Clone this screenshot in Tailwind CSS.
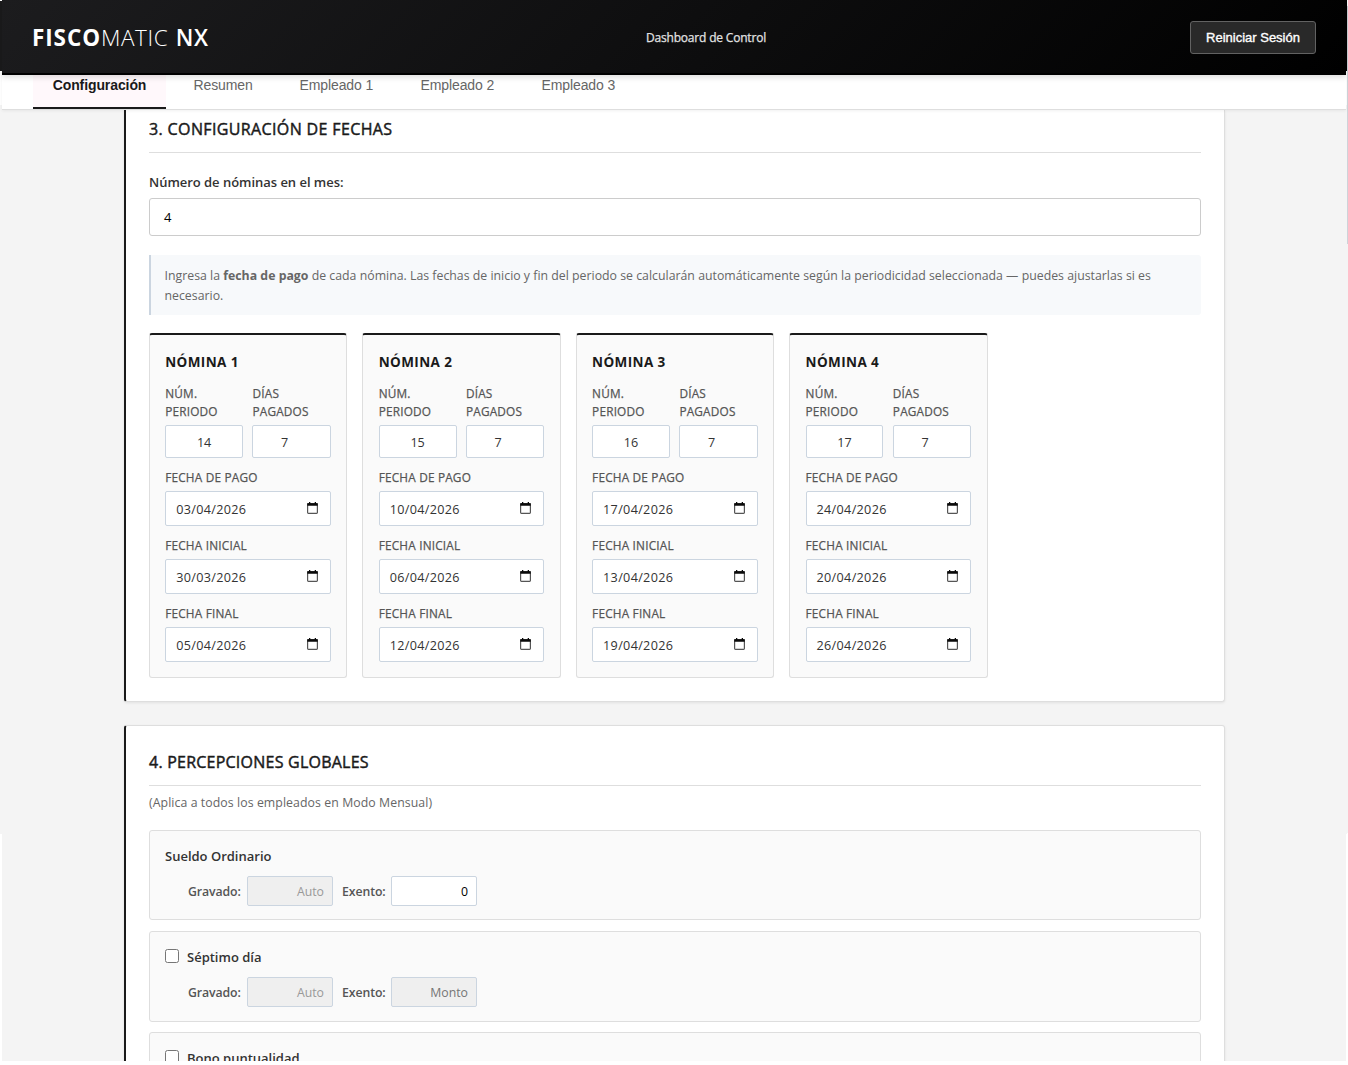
<!DOCTYPE html>
<html lang="es">
<head>
<meta charset="utf-8">
<title>Fiscomatic NX</title>
<script src="https://cdn.jsdelivr.net/npm/@tailwindcss/browser@4"></script>
</head>
<body class="h-[1065px] overflow-hidden bg-white font-['Open_Sans','Noto_Sans',sans-serif]">
<div class="flex h-[1061px] overflow-hidden">
  <div class="flex w-[2px] shrink-0 flex-col">
    <div class="h-[70px] mt-px bg-[#1b1b1c]"></div>
    <div class="h-[34px] bg-white"></div>
    <div class="h-[729px] bg-[#f4f4f4]"></div>
  </div>

  <div class="flex h-[1061px] w-[1344px] shrink-0 flex-col bg-[#f4f4f4]">
    <header class="relative z-20 flex h-[75px] shrink-0 items-center justify-between border-b-2 border-black bg-[linear-gradient(135deg,#1c1c1e,#000)] pr-[30px] pl-[30px] text-white shadow-[0_2px_6px_rgba(0,0,0,0.15)]">
      <div class="flex items-center whitespace-pre pt-[2px] text-[22.5px] leading-[30px]"><span class="font-bold tracking-[0.9px]">FISCO</span><span class="font-light tracking-[0.6px]">MATIC </span><span class="ml-px font-semibold tracking-[0.6px]">NX</span></div>
      <div class="absolute left-[644px] top-[28px] whitespace-nowrap text-[12px] leading-[20px] tracking-[-0.19px] text-[#e2e2e2] [-webkit-text-stroke:0.25px_#e2e2e2]">Dashboard de Control</div>
      <button class="mt-[2px] flex h-[33px] w-[126px] items-center justify-center rounded-[3px] border border-[#626262] bg-[#292929] pt-px font-['Liberation_Sans',Arial,sans-serif] text-[13px] whitespace-nowrap text-white [-webkit-text-stroke:0.35px_white]">Reiniciar Sesión</button>
    </header>

    <nav class="relative z-10 flex h-[35px] shrink-0 gap-[7.5px] border-b border-[#dedede] bg-white pl-[31px] font-['Liberation_Sans',Arial,sans-serif] text-[14px] leading-[20px] tracking-[-0.1px] text-[#666] shadow-[0_1px_3px_rgba(0,0,0,0.06)]">
      <div class="flex h-[34px] w-[133px] justify-center border-b-2 border-[#1a1a1a] bg-[#fff8fb] font-bold text-[#1a1a1a]">Configuración</div>
      <div class="w-[98.5px] px-5">Resumen</div>
      <div class="w-[113.5px] px-5 whitespace-nowrap">Empleado 1</div>
      <div class="w-[113.5px] px-5 whitespace-nowrap">Empleado 2</div>
      <div class="w-[113.5px] px-5 whitespace-nowrap">Empleado 3</div>
    </nav>

    <main class="flex flex-col gap-[23px] pl-[122px]">
      <section class="h-[592px] w-[1101px] shrink-0 rounded-b-[3px] border-r border-b border-l-2 border-r-[#dedede] border-b-[#dedede] border-l-[#1a1a1a] bg-white px-[23px] shadow-[0_1px_3px_rgba(0,0,0,0.08)]">
        <h2 class="h-[43px] border-b border-[#dedede] pt-[8px] text-[16px] leading-[23px] tracking-[0.37px] text-[#1a1a1a] [-webkit-text-stroke:0.45px_#1a1a1a]">3. CONFIGURACIÓN DE FECHAS</h2>
        <label class="mt-[19px] block h-[26px] text-[13px] leading-[20px] font-semibold tracking-[-0.03px] text-[#333]">Número de nóminas en el mes:</label>
        <div class="flex h-[38px] items-center rounded-[3px] border border-[#ccc] pt-px pl-[14px] text-[13px] text-black">4</div>
        <p class="mt-[19px] h-[60px] rounded-r-[3px] border-l-2 border-[#cbd5e0] bg-[#f7f9fb] pt-[11px] pl-[13.5px] text-[12.3px] leading-[20px] tracking-[0.012px] text-[#666]">Ingresa la <b>fecha de pago</b> de cada nómina. Las fechas de inicio y fin del periodo se calcularán automáticamente según la periodicidad seleccionada — puedes ajustarlas si es<br>necesario.</p>
        <div id="grid" class="mt-[18px] grid grid-cols-5 gap-[15.3px]"></div>
      </section>

      <section class="h-[420px] w-[1101px] shrink-0 rounded-[3px] border border-l-2 border-[#dedede] border-l-[#1a1a1a] bg-white px-[23px] shadow-[0_1px_3px_rgba(0,0,0,0.08)]">
        <h2 class="h-[60px] border-b border-[#dedede] pt-[25px] text-[16px] leading-[23px] tracking-[0.23px] text-[#1a1a1a] [-webkit-text-stroke:0.45px_#1a1a1a]">4. PERCEPCIONES GLOBALES</h2>
        <p class="mt-[7px] h-[37px] text-[12.3px] leading-[20px] tracking-[0.075px] text-[#666]">(Aplica a todos los empleados en Modo Mensual)</p>
        <div id="items" class="flex flex-col"></div>
      </section>
    </main>
  </div>

  <div class="flex w-[2px] shrink-0">
    <div class="flex w-px flex-col">
      <div class="h-[71px] bg-black"></div>
      <div class="h-[34px] bg-white"></div>
      <div class="h-[729px] bg-[#f4f4f4]"></div>
    </div>
    <div class="flex w-px flex-col pt-[6px]">
      <div class="h-[238px] bg-[#ced3d9]"></div>
      <div class="h-[589px] bg-[#f4f4f4]"></div>
    </div>
  </div>
</div>
<script>
const payrolls = [
  [14, '03/04/2026', '30/03/2026', '05/04/2026'],
  [15, '10/04/2026', '06/04/2026', '12/04/2026'],
  [16, '17/04/2026', '13/04/2026', '19/04/2026'],
  [17, '24/04/2026', '20/04/2026', '26/04/2026'],
];
const calendar = `<svg class="mb-[2px] h-[12px] w-[11px]" viewBox="0 0 11 12"><rect x="0.6" y="1.6" width="9.8" height="9.8" rx="0.8" fill="none" stroke="#555" stroke-width="1.2"/><path d="M0.3 1.2h10.4v2.6H0.3zM2 0h1.3v1.5H2zM7.7 0H9v1.5H7.7z" fill="#0a0a0a"/></svg>`;
const labelStyle = 'text-[11.8px] leading-[18px] tracking-[0.2px] text-[#555] [-webkit-text-stroke:0.25px_#555]';
const dateField = (label, value) => `
  <div class="h-[68px]">
    <div class="h-[23px] ${labelStyle}">${label}</div>
    <div class="flex h-[35px] items-center justify-between rounded-[2px] border border-[#cbd5e0] bg-white pr-[12px] pl-[10px] text-[12.6px] text-[#333]"><span class="pt-[4px] tracking-[0.33px]">${value}</span>${calendar}</div>
  </div>`;
const numField = (label, value, width, shift) => `
  <div class="${width}">
    <div class="h-[41px] ${labelStyle}">${label}</div>
    <div class="flex h-[33px] items-center justify-center rounded-[2px] border border-[#cbd5e0] bg-white pt-[4px] text-[12.6px] text-[#333] ${shift}">${value}</div>
  </div>`;
document.getElementById('grid').innerHTML = payrolls.map(([n, a, b, c], i) => `
  <div class="h-[345px] rounded-[3px] border border-t-2 border-[#dedede] border-t-[#1a1a1a] bg-[#fafafa] px-[15.2px] pt-[17px]">
    <h3 class="h-[32px] text-[13.5px] leading-[20px] font-bold tracking-[0.4px] text-[#1a1a1a]">NÓMINA ${i + 1}</h3>
    <div class="flex h-[84px] gap-[9.4px]">${numField('NÚM.<br>PERIODO', n, 'w-[77.9px]', '')}${numField('DÍAS<br>PAGADOS', 7, 'flex-1', 'pr-[14px]')}</div>
    ${dateField('FECHA DE PAGO', a)}${dateField('FECHA INICIAL', b)}${dateField('FECHA FINAL', c)}
  </div>`).join('');

const monto = '<span class="text-[#757575]">Monto</span>';
const concepts = [
  ['Sueldo Ordinario', false, 'h-[90px]', '<span class="text-black">0</span>', 'bg-white'],
  ['Séptimo día', true, 'mt-[11px] h-[91px]', monto, 'bg-[#efefef]'],
  ['Bono puntualidad', true, 'mt-[10px] h-[91px]', null, ''],
];
document.getElementById('items').innerHTML = concepts.map(([name, check, box, exempt, bg]) => `
  <div class="${box} rounded-[3px] border border-[#dedede] bg-[#fafafa] px-[15px] pt-[15px]">
    <div class="flex h-[30px] items-start text-[13px] leading-[20px] font-semibold text-[#333]">
      ${check ? '<span class="mt-[2px] mr-[8px] h-[14px] w-[14px] rounded-[2.5px] border border-[#767676] bg-white"></span>' : ''}<span>${name}</span>
    </div>
    ${exempt ? `<div class="flex h-[30px] items-center pl-[23px] text-[12.3px] text-[#555]">
      <span class="w-[59px] pt-[2px] font-semibold tracking-[-0.1px] whitespace-nowrap">Gravado:</span>
      <div class="flex h-[30px] w-[86px] items-center justify-end rounded-[2px] border border-[#cbd5e0] bg-[#efefef] pt-[2px] pr-[8px] text-[#999]">Auto</div>
      <span class="ml-[9px] w-[49px] pt-[2px] font-semibold tracking-[-0.1px] whitespace-nowrap">Exento:</span>
      <div class="flex h-[30px] w-[86px] items-center justify-end rounded-[2px] border border-[#cbd5e0] ${bg} pt-[2px] pr-[8px]">${exempt}</div>
    </div>` : ''}
  </div>`).join('');
</script>
</body>
</html>
